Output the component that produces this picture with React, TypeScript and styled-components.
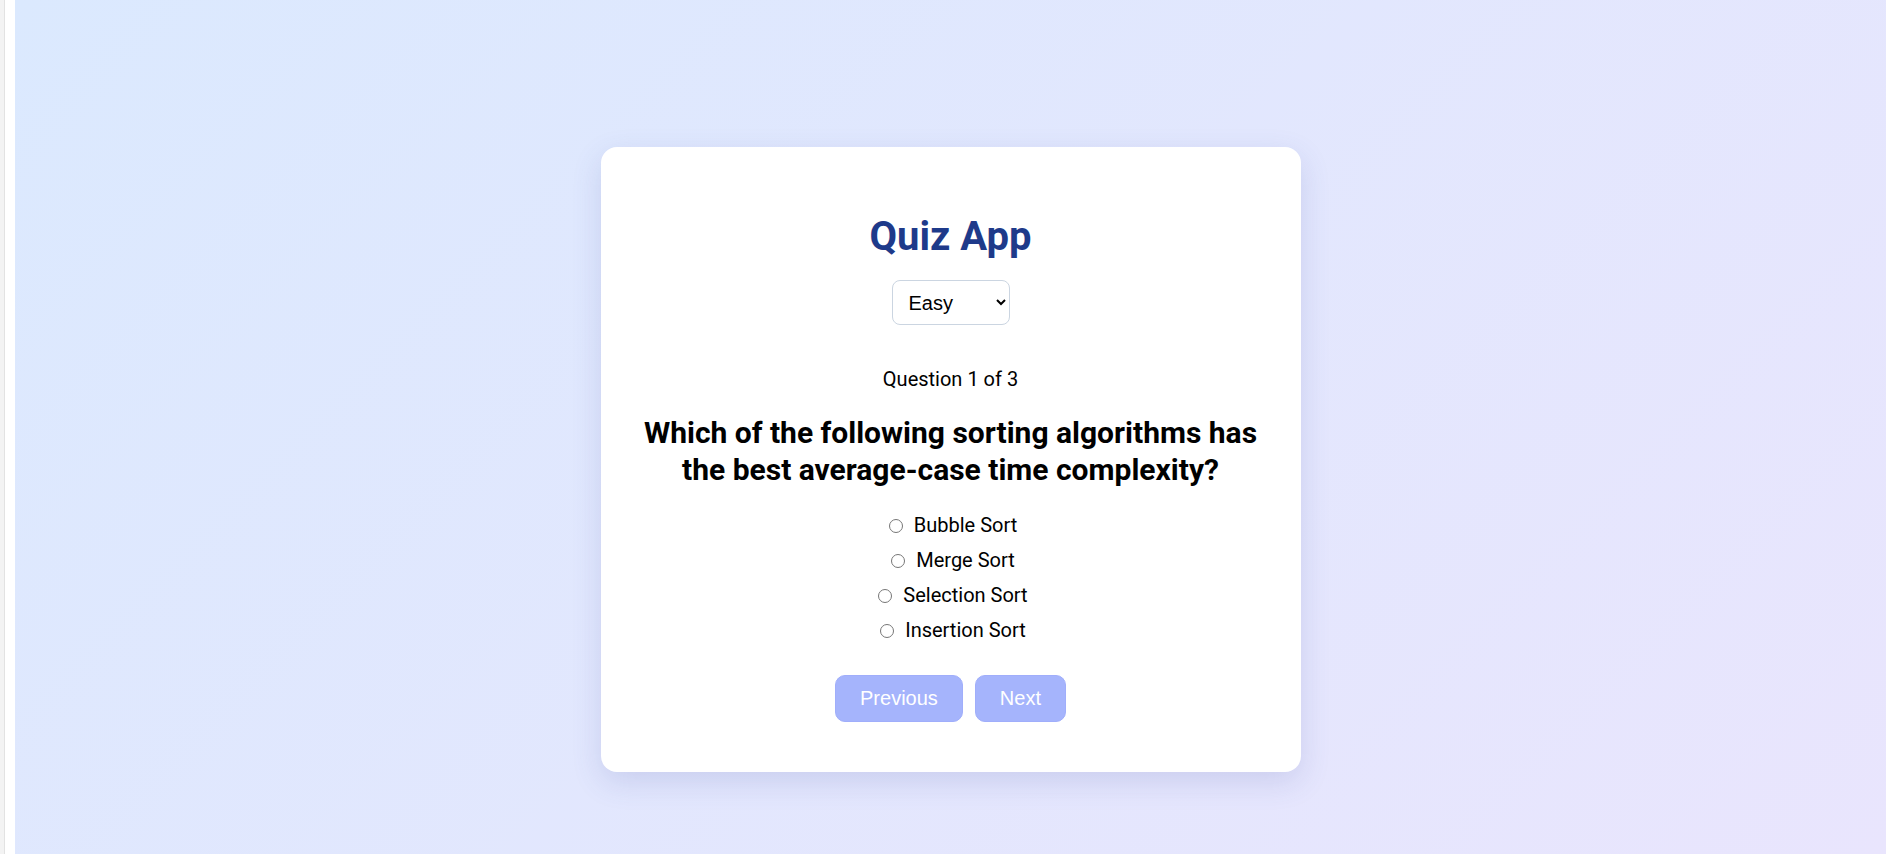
import React, { useState } from "react";
import styled, { createGlobalStyle } from "styled-components";

const GlobalStyle = createGlobalStyle`
  html, body { margin: 0; padding: 0; }
  body { font-family: Roboto, "Liberation Sans", Arial, sans-serif; background: #ffffff; }
  * { box-sizing: border-box; }
`;

const Frame = styled.div`
  display: flex;
  width: 1899px;
  height: 854px;
  overflow: hidden;
  background: #ffffff;
`;

const EdgeStrip = styled.div`
  width: 4px;
  flex: none;
  background: #f3f3f3;
  border-right: 1px solid #e2e2e2;
  box-sizing: content-box;
`;

const Gutter = styled.div<{ $w: number }>`
  width: ${(p) => p.$w}px;
  flex: none;
  background: #ffffff;
`;

const Stage = styled.main`
  flex: 1;
  display: flex;
  justify-content: center;
  align-items: flex-start;
  padding-top: 147px;
  background: linear-gradient(135deg, #dbe9fe 0%, #e9e5fd 100%);
`;

const Card = styled.section`
  width: 700px;
  background: #ffffff;
  border-radius: 16px;
  padding: 40px 40px 50px;
  box-shadow: 0 10px 30px rgba(70, 80, 160, 0.16);
  display: flex;
  flex-direction: column;
  align-items: center;
  text-align: center;
`;

const Title = styled.h1`
  margin: 26px 0 20px;
  font-size: 40px;
  font-weight: 700;
  line-height: 47px;
  color: #1e3a8a;
`;

const LevelSelect = styled.select`
  width: 118px;
  height: 45px;
  padding: 0 10px 0 12px;
  font-family: "Liberation Sans", Arial, sans-serif;
  font-size: 20px;
  color: #000000;
  background: #ffffff;
  border: 1px solid #cbd5e1;
  border-radius: 8px;
`;

const Counter = styled.p`
  margin: 43px 0 0;
  font-size: 20px;
  line-height: 23px;
  color: #000000;
`;

const QuestionText = styled.h2`
  margin: 23px 0 0;
  font-size: 30px;
  font-weight: 700;
  line-height: 37px;
  color: #000000;
`;

const Options = styled.div`
  margin-top: 26px;
  display: flex;
  flex-direction: column;
  align-items: center;
  gap: 12px;
`;

const OptionLabel = styled.label`
  display: flex;
  align-items: center;
  font-size: 20px;
  line-height: 23px;
  color: #000000;
  cursor: pointer;
`;

const Radio = styled.input`
  width: 14px;
  height: 14px;
  margin: 0 11px 0 5px;
`;

const Actions = styled.div`
  margin-top: 33px;
  display: flex;
  gap: 12px;
`;

const NavButton = styled.button`
  height: 47px;
  padding: 0 24px;
  font-family: "Liberation Sans", Arial, sans-serif;
  font-size: 20px;
  color: #ffffff;
  background: #a5b4fc;
  border: 1px solid #a0aefb;
  border-radius: 10px;
  cursor: not-allowed;
`;

const options = ["Bubble Sort", "Merge Sort", "Selection Sort", "Insertion Sort"];

export default function App() {
  const [level, setLevel] = useState("easy");
  const [answer, setAnswer] = useState<string | null>(null);
  return (
    <>
      <GlobalStyle />
      <Frame>
        <EdgeStrip />
        <Gutter $w={10} />
        <Stage>
          <Card>
            <Title>Quiz App</Title>
            <LevelSelect value={level} onChange={(e) => setLevel(e.target.value)}>
              <option value="easy">Easy</option>
              <option value="medium">Medium</option>
              <option value="hard">Hard</option>
            </LevelSelect>
            <Counter>Question 1 of 3</Counter>
            <QuestionText>
              Which of the following sorting algorithms has
              <br />
              the best average-case time complexity?
            </QuestionText>
            <Options>
              {options.map((o) => (
                <OptionLabel key={o}>
                  <Radio
                    type="radio"
                    name="answer"
                    checked={answer === o}
                    onChange={() => setAnswer(o)}
                  />
                  {o}
                </OptionLabel>
              ))}
            </Options>
            <Actions>
              <NavButton disabled>Previous</NavButton>
              <NavButton disabled>Next</NavButton>
            </Actions>
          </Card>
        </Stage>
        <Gutter $w={13} />
      </Frame>
    </>
  );
}
